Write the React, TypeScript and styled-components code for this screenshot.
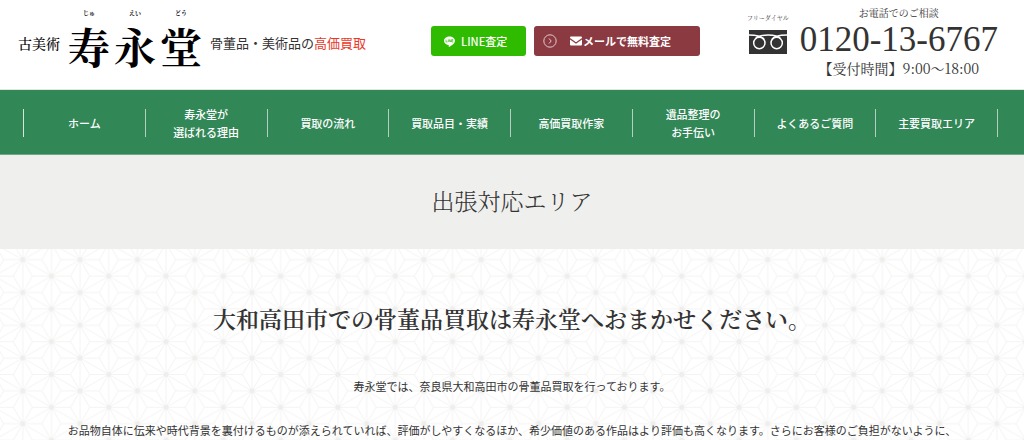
import React from "react";
import styled, { createGlobalStyle } from "styled-components";

const sans = `"Noto Sans CJK JP", "Noto Sans", sans-serif`;
const mincho = `"Noto Serif CJK JP", "Liberation Serif", "Noto Sans CJK JP", serif`;

const GlobalStyle = createGlobalStyle`
  * { box-sizing: border-box; }
  body { margin: 0; background: #fff; color: #333; font-family: ${sans}; font-size: 11px; line-height: 18px; }
  h1, h2, p, ul { margin: 0; padding: 0; }
  a { color: inherit; text-decoration: none; }
`;

const Page = styled.div`
  min-height: 100vh;
  display: flex;
  flex-direction: column;
`;

const Header = styled.header`
  display: flex;
  align-items: flex-start;
  flex-shrink: 0;
  padding: 0 26px 13px 18px;
  border-bottom: 1px solid #e2e6e2;
`;

const Brand = styled.a`
  display: flex;
  align-items: center;
  padding-top: 7px;
  color: #000;
`;

const BrandPrefix = styled.span`
  font: 500 14px/20px ${mincho};
  padding-top: 5px;
  margin-right: 8px;
`;

const BrandName = styled.span`
  display: flex;
  gap: 4px;
`;

const BrandGlyph = styled.span`
  display: flex;
  flex-direction: column;
  align-items: center;
  font: 700 42px/54px ${mincho};
`;

const Reading = styled.span`
  font: 700 6px/12px ${mincho};
`;

const Tagline = styled.p`
  font-size: 13px;
  line-height: 20px;
  padding-top: 33px;
  margin-left: 8px;
`;

const Accent = styled.span`
  color: #e8392b;
`;

const BrandArea = styled.div`
  display: flex;
`;

const Actions = styled.div`
  display: flex;
  gap: 8px;
  padding-top: 26px;
  margin-left: 65px;
`;

const Action = styled.a<{ $bg: string; $wide?: boolean }>`
  display: flex;
  align-items: center;
  height: 30px;
  width: ${(p) => (p.$wide ? 166 : 95)}px;
  padding: 0 ${(p) => (p.$wide ? 9 : 13)}px;
  border-radius: 3px;
  background: ${(p) => p.$bg};
  color: #fff;
  font-weight: ${(p) => (p.$wide ? 700 : 500)};
`;

const ActionLabel = styled.span<{ $wide?: boolean }>`
  display: flex;
  align-items: center;
  gap: 1px;
  margin-left: ${(p) => (p.$wide ? 13 : 6)}px;
`;

const Phone = styled.div`
  display: flex;
  gap: 11px;
  padding-top: 5px;
  margin-left: auto;
`;

const FreeDial = styled.div`
  display: flex;
  flex-direction: column;
  align-items: center;
  font: 6px/12px ${mincho};
  padding-top: 7px;
  svg { margin-top: 6px; }
`;

const PhoneText = styled.div`
  display: flex;
  flex-direction: column;
  align-items: center;
  font-family: ${mincho};
`;

const PhoneNote = styled.span`
  font-size: 10px;
  line-height: 15px;
`;

const PhoneNumber = styled.a`
  font-family: "Liberation Serif", serif;
  font-size: 35px;
  line-height: 40px;
`;

const Hours = styled.span`
  font-size: 14px;
  line-height: 16px;
`;

const Nav = styled.nav`
  background: #328757;
  border-bottom: 1px solid #6fa587;
  padding: 19px 26px 17px 23px;
`;

const NavList = styled.ul`
  display: flex;
  list-style: none;
  border-left: 1px solid #d5e5dc;
`;

const NavItem = styled.li`
  flex: 1 1 0;
  border-right: 1px solid #b5d0c0;
`;

const NavLink = styled.a`
  display: flex;
  align-items: center;
  justify-content: center;
  height: 28px;
  text-align: center;
  white-space: pre-line;
  color: #fff;
  font-weight: 500;
`;

const TitleBand = styled.div`
  background: #efefed;
  padding: 28px 0 31px;
  text-align: center;
`;

const Title = styled.h1`
  font: 300 23px/35px ${mincho};
`;

const Content = styled.main`
  position: relative;
  flex: 1;
  text-align: center;
  padding: 53px 24px 0;
`;

const Backdrop = styled.svg`
  position: absolute;
  inset: 0;
  width: 100%;
  height: 100%;
  z-index: -1;
`;

const Heading = styled.h2`
  font: 600 23px/34px ${mincho};
  margin-bottom: 41px;
`;

const Paragraph = styled.p`
  & + & {
    margin-top: 26px;
  }
`;

const items = [
  "ホーム",
  "寿永堂が\n選ばれる理由",
  "買取の流れ",
  "買取品目・実績",
  "高価買取作家",
  "遺品整理の\nお手伝い",
  "よくあるご質問",
  "主要買取エリア",
];

const glyphs = [
  ["寿", "じゅ"],
  ["永", "えい"],
  ["堂", "どう"],
];

const LineIcon = () => (
  <svg width="11" height="11" viewBox="0 0 22 22" aria-hidden="true">
    <path fill="#fff" d="M11 1C5 1 0 4.800 0 9.600c0 4.200 3.700 7.700 8.700 8.400 1.300.300.900 1.700.7 3.300 0 .7.500.9 1.300.4C14 19.800 22 15.500 22 9.600 22 4.800 17 1 11 1Z" />
    <path fill="none" stroke="#2fbb00" strokeWidth="1.300" d="M4 7v5h3M8.500 7v5M10.500 12V7l3.300 5V7M18.500 7h-3v5h3M15.500 9.500h3" />
  </svg>
);

const ArrowIcon = () => (
  <svg width="14" height="14" viewBox="0 0 14 14" fill="none" stroke="#e3c9cb" aria-hidden="true">
    <circle cx="7" cy="7" r="6.200" />
    <path d="M6 4.500 8.200 7 6 9.500" />
  </svg>
);

const MailIcon = () => (
  <svg width="12" height="10" viewBox="0 0 24 20" fill="#fff" aria-hidden="true">
    <path d="M2 1h20a2 2 0 0 1 2 2v1L12 12.500 0 4V3a2 2 0 0 1 2-2Z" />
    <path d="M0 7l12 8.500L24 7v10a2 2 0 0 1-2 2H2a2 2 0 0 1-2-2Z" />
  </svg>
);

const FreeDialIcon = () => (
  <svg width="38" height="24" viewBox="0 0 114 72" aria-hidden="true">
    <path fill="#333" d="M0 0h114v72H0z" />
    <g fill="none" stroke="#fff" strokeWidth="4.500">
      <circle cx="31" cy="39" r="17" />
      <circle cx="83" cy="39" r="17" />
      <path d="M0 15C14 15 38 16 46 29M114 15C100 15 76 16 68 29M20 25C30 12 84 12 94 25" />
    </g>
  </svg>
);

const Asanoha = () => (
  <Backdrop aria-hidden="true">
    <defs>
      <pattern id="asanoha" width="57.300" height="32.800" x="22.800" y="10.700" patternUnits="userSpaceOnUse">
        <g fill="none" stroke="#f4f4f3" strokeWidth="1">
          <path d="M0 0V32.800M57.300 0V32.800M28.650 0V32.800M0 0L57.300 32.800M57.300 0L0 32.800" />
          <path d="M0 0L9.550 16.400L0 32.800M9.550 16.400H28.650M57.300 0L47.750 16.400L57.300 32.800M47.750 16.400H28.650" />
          <path d="M0 0H19.100L28.650 16.400L38.200 0H57.300M0 32.800H19.100L28.650 16.400L38.200 32.800H57.300" />
        </g>
        <g fill="#eeeeed">
          <circle r="2.500" />
          <circle cx="57.300" r="2.500" />
          <circle cy="32.800" r="2.500" />
          <circle cx="57.300" cy="32.800" r="2.500" />
          <circle cx="28.650" cy="16.400" r="2.500" />
        </g>
      </pattern>
    </defs>
    <rect width="100%" height="100%" fill="url(#asanoha)" />
  </Backdrop>
);

export default function App() {
  return (
    <Page>
      <GlobalStyle />
      <Header>
        <BrandArea>
          <Brand href="#">
            <BrandPrefix>古美術</BrandPrefix>
            <BrandName>
              {glyphs.map(([glyph, reading]) => (
                <BrandGlyph key={glyph}>
                  <Reading>{reading}</Reading>
                  {glyph}
                </BrandGlyph>
              ))}
            </BrandName>
          </Brand>
          <Tagline>
            骨董品・美術品の<Accent>高価買取</Accent>
          </Tagline>
        </BrandArea>
        <Actions>
          <Action href="#line" $bg="#2fbb00">
            <LineIcon />
            <ActionLabel>LINE査定</ActionLabel>
          </Action>
          <Action href="#mail" $bg="#8c3a42" $wide>
            <ArrowIcon />
            <ActionLabel $wide>
              <MailIcon />
              メールで無料査定
            </ActionLabel>
          </Action>
        </Actions>
        <Phone>
          <FreeDial>
            フリーダイヤル
            <FreeDialIcon />
          </FreeDial>
          <PhoneText>
            <PhoneNote>お電話でのご相談</PhoneNote>
            <PhoneNumber href="tel:0120136767">0120-13-6767</PhoneNumber>
            <Hours>【受付時間】9:00～18:00</Hours>
          </PhoneText>
        </Phone>
      </Header>
      <Nav>
        <NavList>
          {items.map((item) => (
            <NavItem key={item}>
              <NavLink href="#">{item}</NavLink>
            </NavItem>
          ))}
        </NavList>
      </Nav>
      <TitleBand>
        <Title>出張対応エリア</Title>
      </TitleBand>
      <Content>
        <Asanoha />
        <Heading>大和高田市での骨董品買取は寿永堂へおまかせください。</Heading>
        <Paragraph>寿永堂では、奈良県大和高田市の骨董品買取を行っております。</Paragraph>
        <Paragraph>
          お品物自体に伝来や時代背景を裏付けるものが添えられていれば、評価がしやすくなるほか、希少価値のある作品はより評価も高くなります。さらにお客様のご負担がないように、
        </Paragraph>
      </Content>
    </Page>
  );
}
